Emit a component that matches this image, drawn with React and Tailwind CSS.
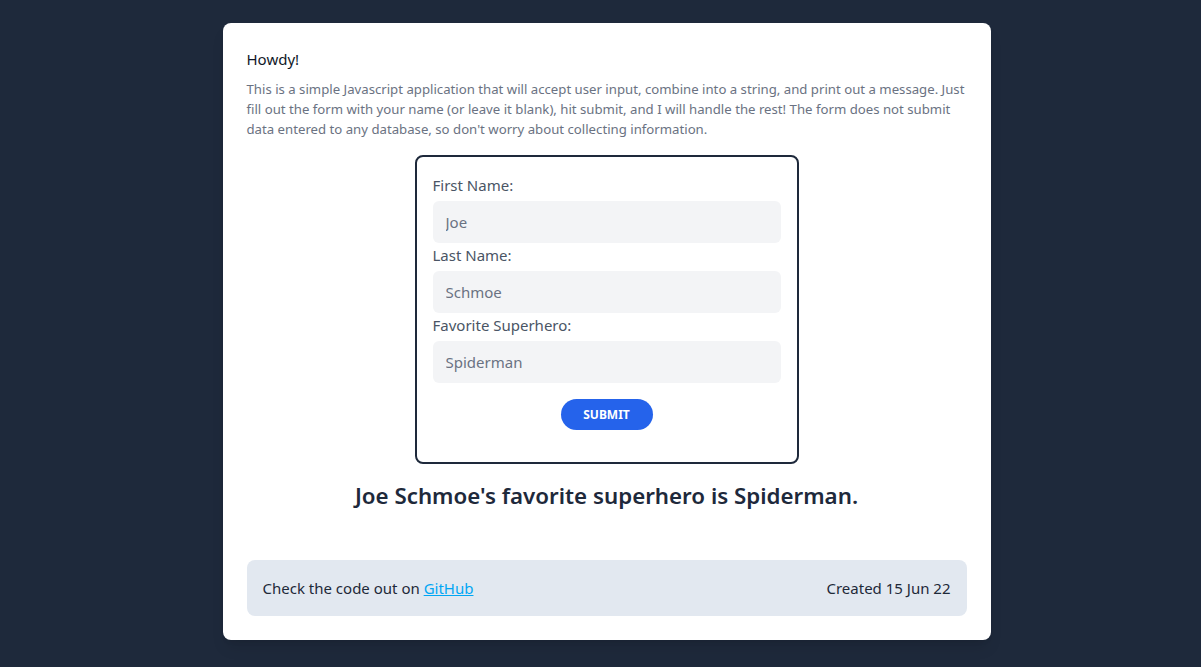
import React from "react";

export default function App() {
  return (
    <div
      className="min-h-screen w-full bg-[#1e293b] pt-[23px] pb-[27px] pl-3"
      style={{ fontFamily: '"Segoe UI", "Noto Sans", "Open Sans", sans-serif' }}
    >
      <div className="mx-auto w-[768px] rounded-lg bg-white p-6 shadow-lg">
        <h1 className="text-[15px] leading-6 text-gray-900">Howdy!</h1>
        <p className="mt-2 text-[13.2px] leading-5 text-gray-500">
          This is a simple Javascript application that will accept user input, combine into a string, and print out a
          message. Just fill out the form with your name (or leave it blank), hit submit, and I will handle the rest! The
          form does not submit data entered to any database, so don't worry about collecting information.
        </p>
        <form
          className="mx-auto mt-4 flex w-96 flex-col rounded-lg border-2 border-[#1e293b] p-4"
          onSubmit={(e) => e.preventDefault()}
        >
          <label className="text-[15px] leading-6 text-gray-600">First Name:</label>
          <input
            className="mt-1 h-[42px] rounded-md bg-gray-100 px-[13px] text-[15px] text-gray-500 outline-none"
            defaultValue="Joe"
          />
          <label className="text-[15px] leading-6 text-gray-600">Last Name:</label>
          <input
            className="mt-1 h-[42px] rounded-md bg-gray-100 px-[13px] text-[15px] text-gray-500 outline-none"
            defaultValue="Schmoe"
          />
          <label className="text-[15px] leading-6 text-gray-600">Favorite Superhero:</label>
          <input
            className="mt-1 h-[42px] rounded-md bg-gray-100 px-[13px] text-[15px] text-gray-500 outline-none"
            defaultValue="Spiderman"
          />
          <button
            type="submit"
            className="mx-auto mt-4 mb-4 h-[31px] w-[92px] rounded-full bg-[#2563eb] text-xs font-bold uppercase text-white"
          >
            Submit
          </button>
        </form>
        <p className="mt-4 text-center text-[22.3px] font-semibold leading-8 text-[#1e293b]">
          Joe Schmoe's favorite superhero is Spiderman.
        </p>
        <footer className="mt-12 flex items-center justify-between rounded-lg bg-[#e2e8f0] px-4 py-4 text-[15px] leading-6 text-gray-800">
          <span>
            Check the code out on{" "}
            <a href="#" className="text-sky-500 underline">
              GitHub
            </a>
          </span>
          <span>Created 15 Jun 22</span>
        </footer>
      </div>
    </div>
  );
}
